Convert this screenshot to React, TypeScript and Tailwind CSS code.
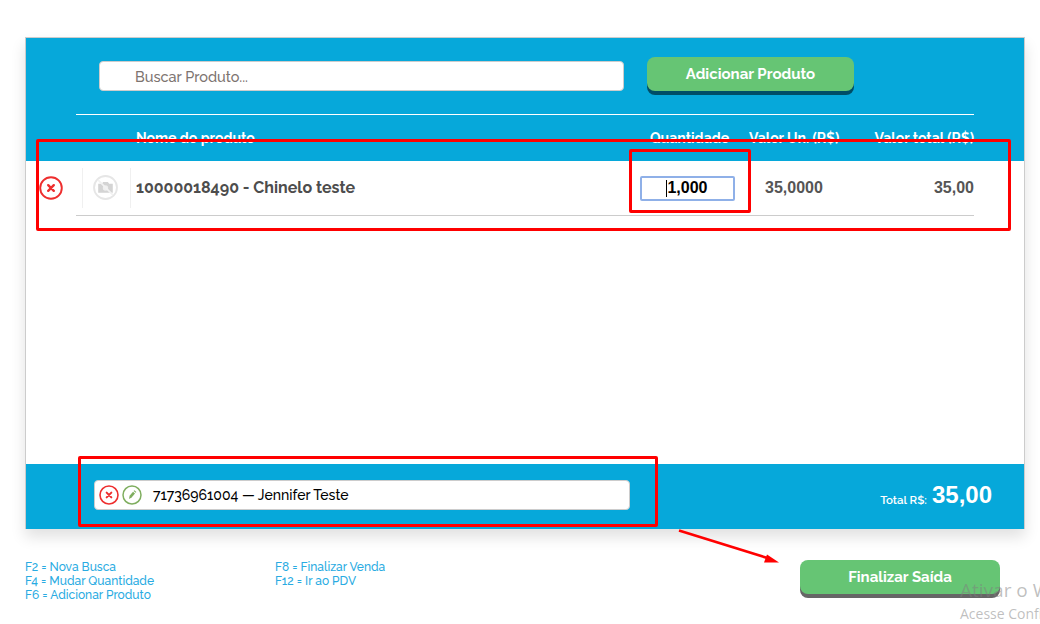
const body = "font-['Raleway','Lato','Liberation_Sans',sans-serif]";

function RemoveIcon({ size }: { size: number }) {
  return (
    <svg width={size} height={size} viewBox="0 0 24 24" fill="none" className="shrink-0">
      <circle cx="12" cy="12" r="10.8" stroke="#ee2e2e" strokeWidth="1.9" />
      <path d="M9.2 9.2l5.6 5.6M14.8 9.2l-5.6 5.6" stroke="#ee2e2e" strokeWidth="2.4" strokeLinecap="round" />
    </svg>
  );
}

function EditIcon() {
  return (
    <svg width="20" height="20" viewBox="0 0 20 20" fill="none" className="shrink-0">
      <circle cx="10" cy="10" r="9" stroke="#7fae5f" strokeWidth="1.5" />
      <path d="M7 14l.6-3.2 3.4-4 2 1.7-3.4 4z" fill="#7fae5f" />
      <path d="M11.6 6.1l.8-.9 2 1.7-.8.9z" fill="#7fae5f" />
    </svg>
  );
}

function NoPhotoIcon() {
  return (
    <svg width="25" height="25" viewBox="0 0 24 24" fill="none" className="mb-px mr-[2px]">
      <circle cx="12" cy="12" r="11" stroke="#e6e6e6" strokeWidth="1.8" />
      <path d="M5 8.5h3.5l1.2-1.8h4.6l1.2 1.8H19v8.5H5z" fill="#d4d4d4" />
      <circle cx="12" cy="12.5" r="2.6" fill="#efefef" />
      <path d="M5 5l14 14" stroke="#f2f2f2" strokeWidth="1.6" />
    </svg>
  );
}

export default function App() {
  return (
    <div className={`relative h-[624px] w-[1040px] overflow-hidden bg-white oldstyle-nums ${body}`}>
      <div className="pl-[25px] pt-[37px]">
        <div className="h-[492px] w-[1000px] flex flex-col border-x border-t border-[#cccccc] shadow-[0_8px_14px_rgba(0,0,0,0.12)]">
          {/* topo azul */}
          <div className="h-[123px] shrink-0 bg-[#06a8da] pl-[50px] pr-[50px]">
            <div className="flex h-[77px] items-start border-b border-white pl-[23px]">
              <input
                readOnly
                placeholder="Buscar Produto..."
                className="mt-[23px] h-[30px] w-[525px] rounded border border-[#cccccc] bg-white pl-[35px] text-[14.5px] font-medium text-[#555] placeholder:text-[#7d7470] outline-none"
              />
              <button className="ml-[23px] mt-[19px] h-[34px] w-[207px] rounded-lg bg-[#66c574] text-[15px] font-bold text-white shadow-[0_4px_0_#004d66]">
                Adicionar Produto
              </button>
            </div>
            <div className="flex pt-[14px] text-sm font-bold leading-[18px] text-white lining-nums">
              <span className="ml-[60px] w-[514px]">Nome do produto</span>
              <span className="w-[99px]">Quantidade</span>
              <span>Valor Un. (R$)</span>
              <span className="ml-auto">Valor total (R$)</span>
            </div>
          </div>

          {/* linha do produto */}
          <div className="flex h-[55px] shrink-0 items-center pl-[13px] pr-[50px]">
            <div className="mb-px shrink-0">
              <RemoveIcon size={24} />
            </div>
            <div className="ml-[13px] flex h-[55px] flex-1 items-center border-b border-[#cccccc]">
              <div className="ml-[6px] flex h-[40px] w-[49px] items-center justify-center border-x border-[#f0f0f0]">
                <NoPhotoIcon />
              </div>
              <span className="ml-[5px] w-[504px] text-base font-bold text-[#4d4d4d]">10000018490 - Chinelo teste</span>
              <div className="relative">
                <input
                  readOnly
                  value="1,000"
                  className="block h-[25px] w-[95px] rounded-[2px] border-2 border-[#8fb0e8] bg-white text-center font-['Liberation_Sans',sans-serif] text-base font-bold text-black outline-none"
                />
                <span className="absolute left-[26px] top-[4px] h-[17px] w-px bg-black" />
              </div>
              <span className="ml-[30px] font-['Liberation_Sans',sans-serif] text-base font-bold text-[#555]">35,0000</span>
              <span className="ml-auto font-['Liberation_Sans',sans-serif] text-base font-bold text-[#555]">35,00</span>
            </div>
          </div>

          <div className="flex-1" />

          {/* rodape azul */}
          <div className="flex h-[65px] shrink-0 items-center bg-[#06a8da] pb-[3px] pl-[68px] pr-[32px]">
            <div className="flex h-[30px] w-[536px] items-center gap-[3px] rounded border border-[#cccccc] bg-white pl-[4px]">
              <RemoveIcon size={20} />
              <EditIcon />
              <span className="ml-[8px] text-sm font-medium text-black">71736961004 — Jennifer Teste</span>
            </div>
            <div className="ml-auto flex items-baseline gap-[5px] text-white">
              <span className="translate-y-px text-[11.5px] font-semibold">Total R$:</span>
              <span className="font-['Liberation_Sans',sans-serif] text-2xl font-bold">35,00</span>
            </div>
          </div>
        </div>

        <div className="flex items-start">
          <div className="mt-[31px] w-[250px] text-xs font-medium leading-[14px] text-[#29abe2]">
            <p>F2 = Nova Busca</p>
            <p>F4 = Mudar Quantidade</p>
            <p>F6 = Adicionar Produto</p>
          </div>
          <div className="mt-[31px] w-[525px] text-xs font-medium leading-[14px] text-[#29abe2]">
            <p>F8 = Finalizar Venda</p>
            <p>F12 = Ir ao PDV</p>
          </div>
          <button className="mt-[31px] h-[34px] w-[200px] rounded-lg bg-[#66c574] text-[15px] font-bold text-white shadow-[0_4px_0_#666666]">
            Finalizar Saída
          </button>
        </div>
      </div>

      {/* marcacoes vermelhas por cima da captura */}
      <div className="absolute left-[36px] top-[139px] h-[92px] w-[975px] rounded-[2px] border-[3px] border-[#ff0000]" />
      <div className="absolute left-[629px] top-[149px] h-[64px] w-[122px] rounded-[2px] border-[3px] border-[#ff0000]" />
      <div className="absolute left-[78px] top-[456px] h-[71px] w-[580px] rounded-[2px] border-[3px] border-[#ff0000]" />
      <svg className="absolute left-[670px] top-[520px]" width="120" height="50" viewBox="0 0 120 50">
        <path d="M9 10.5L99 38.5" stroke="#ff0000" strokeWidth="2.6" />
        <path d="M109 42.5H94L97 34.5z" fill="#ff0000" />
      </svg>

      {/* marca d'agua do Windows */}
      <div className="pointer-events-none absolute left-[960px] top-[576px] whitespace-nowrap font-['Open_Sans',sans-serif] text-[#7f7f7f]/50">
        <p className="text-[19px] leading-[28px]">Ativar o Windows</p>
        <p className="text-sm leading-[19px]">Acesse Configurações</p>
      </div>
    </div>
  );
}
